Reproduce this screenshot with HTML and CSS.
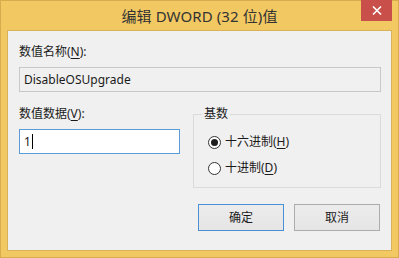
FILE: index.html
```html
<!DOCTYPE html>
<html lang="zh-CN">
<head>
<meta charset="utf-8">
<title>编辑 DWORD (32 位)值</title>
<link rel="stylesheet" href="styles.css">
</head>
<body>
<div class="window">
  <div class="titlebar">
    <div class="title">编辑 DWORD (32 位)值</div>
    <div class="close" aria-label="关闭">
      <svg width="10" height="9" viewBox="0 0 10 9"><path d="M1 0.5 L9 8.5 M9 0.5 L1 8.5" stroke="#fff" stroke-width="1.6" fill="none"/></svg>
    </div>
  </div>
  <div class="client">
    <div class="label">数值名称(<u>N</u>):</div>
    <div class="textbox readonly">DisableOSUpgrade</div>
    <div class="row">
      <div class="leftcol">
        <div class="label">数值数据(<u>V</u>):</div>
        <div class="textbox focused"><span>1</span><span class="caret"></span></div>
      </div>
      <fieldset class="group">
        <legend>基数</legend>
        <div class="radio first"><span class="dot checked"></span><span>十六进制(<u>H</u>)</span></div>
        <div class="radio second"><span class="dot"></span><span>十进制(<u>D</u>)</span></div>
      </fieldset>
    </div>
    <div class="buttons">
      <div class="btn default">确定</div>
      <div class="btn">取消</div>
    </div>
  </div>
</div>
</body>
</html>
```

FILE: styles.css
```css
html, body {
  margin: 0;
  padding: 0;
}
body {
  width: 399px;
  height: 258px;
  overflow: hidden;
  font-family: "Noto Sans", "Noto Sans CJK SC", sans-serif;
  font-size: 12px;
  color: #1b1b1b;
}
.window {
  box-sizing: border-box;
  width: 399px;
  height: 258px;
  background: #f2c862;
  border: 1px solid #d8ac4c;
  padding: 0 6px 6px 6px;
  display: flex;
  flex-direction: column;
}
.titlebar {
  height: 29px;
  flex: none;
  display: flex;
  justify-content: center;
  align-items: center;
  position: relative;
}
.title {
  font-family: "Noto Sans", "Noto Sans CJK SC", sans-serif;
  font-size: 15px;
  color: #333333;
  line-height: 20px;
  letter-spacing: 0.1px;
}
.close {
  position: absolute;
  right: 0;
  top: -1px;
  width: 31px;
  height: 21px;
  background: #c9504a;
  display: flex;
  align-items: center;
  justify-content: center;
}
.client {
  flex: 1;
  background: #f0f0f0;
  border: 1px solid #d9b15a;
  padding: 13px 10px 0 11px;
}
.label {
  line-height: 16px;
  height: 16px;
  white-space: nowrap;
}
u {
  text-decoration-thickness: 1px;
  text-underline-offset: 2px;
}
.textbox {
  box-sizing: border-box;
  height: 25px;
  margin-top: 7px;
  border: 1px solid #c8c8c8;
  background: #f0f0f0;
  padding: 0 4px;
  line-height: 23px;
  display: flex;
  align-items: center;
}
.textbox.focused {
  background: #ffffff;
  border-color: #5b9bd8;
}
.caret {
  display: inline-block;
  width: 1px;
  height: 15px;
  background: #000;
  margin-left: 1px;
}
.row {
  margin-top: 14px;
  display: flex;
  gap: 13px;
}
.leftcol {
  width: 161px;
}
.group {
  flex: 1;
  margin: 0;
  padding: 0 0 11px 14px;
  border: 1px solid #dadada;
  min-width: 0;
}
.group legend {
  padding: 0 2px;
  margin-left: -6px;
  line-height: 16px;
}
.radio {
  display: flex;
  align-items: center;
  gap: 4px;
  line-height: 16px;
  height: 16px;
}
.radio.first {
  margin-top: 12px;
}
.radio.second {
  margin-top: 10px;
}
.dot {
  box-sizing: border-box;
  width: 13px;
  height: 13px;
  border: 1px solid #333;
  border-radius: 50%;
  background: #fff;
  display: flex;
  align-items: center;
  justify-content: center;
}
.dot.checked::after {
  content: "";
  width: 7px;
  height: 7px;
  border-radius: 50%;
  background: #1e1e1e;
}
.buttons {
  margin-top: 16px;
  display: flex;
  justify-content: flex-end;
  gap: 10px;
  padding-right: 1px;
}
.btn {
  box-sizing: border-box;
  width: 86px;
  height: 27px;
  border: 1px solid #acacac;
  background: linear-gradient(#ececec, #e5e5e5);
  display: flex;
  align-items: center;
  justify-content: center;
  line-height: 16px;
}
.btn.default {
  border-color: #4a90d4;
}
```
